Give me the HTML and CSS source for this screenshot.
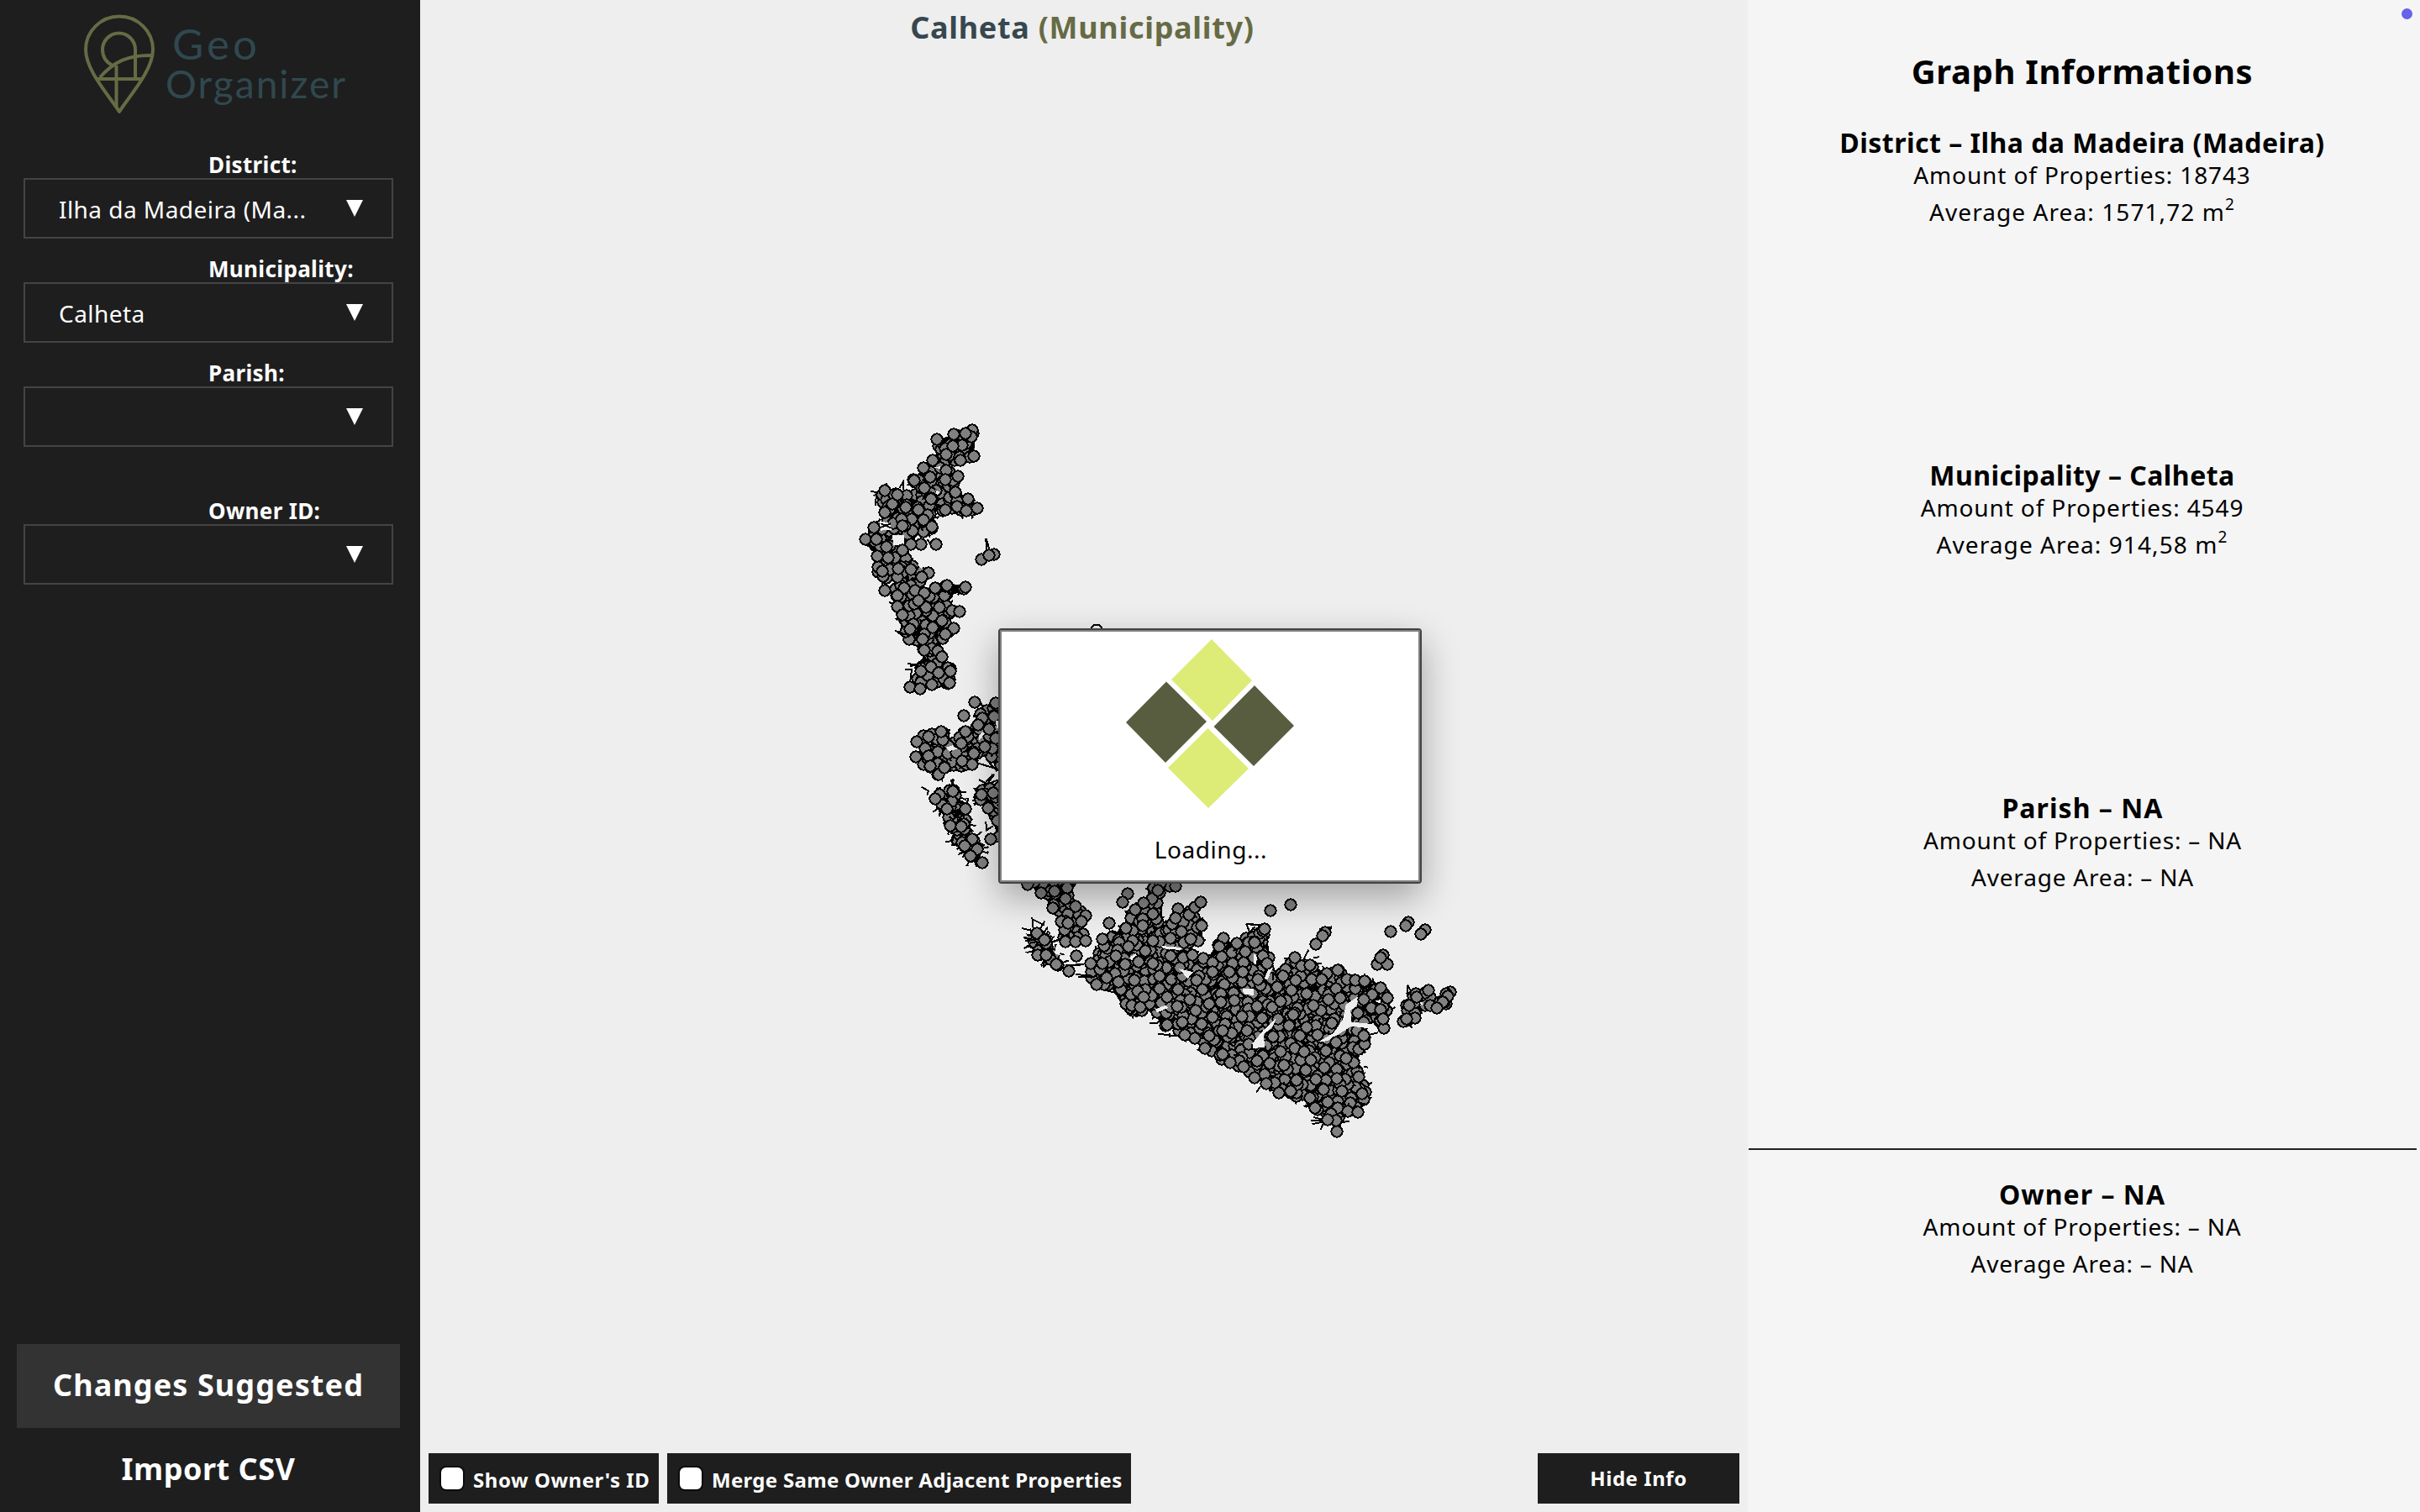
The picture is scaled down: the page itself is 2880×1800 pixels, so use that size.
FILE: index.html
```html
<!DOCTYPE html>
<html lang="en">
<head>
<meta charset="utf-8">
<title>Geo Organizer</title>
<link rel="stylesheet" href="styles.css">
</head>
<body>
<div class="app">
  <aside class="sidebar">
    <svg class="logo" viewBox="0 0 500 180" role="img" aria-label="Geo Organizer">
      <g class="logo-pin">
        <path d="M142 133C130 114 102 84 102 59a40 39.500 0 0 1 80 0C182 84 154 114 142 133Z"/>
        <path d="M134 78C126 74 122 67 122 59a19.500 19.500 0 0 1 39 0V93"/>
        <path d="M119 92C135 74 152 65 181 66M115 94H170M138.500 78V128"/>
      </g>
      <g class="logo-text">
        <text x="205" y="71" font-size="51" textLength="101">Geo</text>
        <text x="197" y="117" font-size="46" textLength="214">Organizer</text>
      </g>
    </svg>
    <div class="field"><label>District:</label><div class="select"><span>Ilha da Madeira (Ma...</span><i class="arrow"></i></div></div>
    <div class="field"><label>Municipality:</label><div class="select"><span>Calheta</span><i class="arrow"></i></div></div>
    <div class="field"><label>Parish:</label><div class="select"><span></span><i class="arrow"></i></div></div>
    <div class="field field-owner"><label>Owner ID:</label><div class="select"><span></span><i class="arrow"></i></div></div>
    <nav class="actions">
      <button class="action active">Changes Suggested</button>
      <button class="action">Import CSV</button>
    </nav>
  </aside>

  <main class="stage">
    <h1 class="title"><span class="place">Calheta</span> <span class="kind">(Municipality)</span></h1>
    <svg class="map" id="map" viewBox="500 72 1580 1658"></svg>
    <div class="toolbar">
      <div class="toggle"><i class="box"></i><span>Show Owner's ID</span></div>
      <div class="toggle toggle-merge"><i class="box"></i><span>Merge Same Owner Adjacent Properties</span></div>
      <button class="hide">Hide Info</button>
    </div>
  </main>

  <aside class="info">
    <h1>Graph Informations</h1>
    <section><h2>District – Ilha da Madeira (Madeira)</h2><p>Amount of Properties: 18743</p><p class="area">Average Area: 1571,72 m<sup>2</sup></p></section>
    <section><h2>Municipality – Calheta</h2><p>Amount of Properties: 4549</p><p class="area">Average Area: 914,58 m<sup>2</sup></p></section>
    <section class="empty last"><h2>Parish – NA</h2><p>Amount of Properties: – NA</p><p>Average Area: – NA</p></section>
    <section class="empty"><h2>Owner – NA</h2><p>Amount of Properties: – NA</p><p>Average Area: – NA</p></section>
  </aside>

  <i class="status-dot"></i>
  <div class="dialog">
    <svg class="spinner" viewBox="1338 760 204 204">
      <path class="lime" d="M1442 761L1490 810L1443 858L1394 809ZM1437.500 867L1486 915L1438 962L1390 914Z"/>
      <path class="olive" d="M1388 811.500L1436 859L1387 908L1340 860ZM1493 816L1540 864L1492 912L1444.500 865Z"/>
    </svg>
    <p>Loading...</p>
  </div>
</div>
<script src="map.js"></script>
</body>
</html>
```
FILE: styles.css
```css
* { box-sizing: border-box; margin: 0; padding: 0; }
body { font-family: "Noto Sans", "Open Sans", sans-serif; font-size: 28px; color: #000; overflow: hidden; }
button { font: inherit; letter-spacing: inherit; border: 0; background: none; color: inherit; }
.app { position: relative; display: grid; grid-template-columns: 500px 1580px 800px; width: 2880px; height: 1800px; }

.sidebar { display: flex; flex-direction: column; background: #1e1e1e; color: #fff; }
.logo { display: block; width: 500px; height: 180px; flex: none; }
.logo-pin { fill: none; stroke: #666b45; stroke-width: 4; stroke-linejoin: round; }
.logo-text { font-family: Lato, sans-serif; fill: #30484f; }
.field { display: flex; flex-direction: column; width: 440px; margin: 0 0 20px 28px; }
.field-owner { margin-top: 40px; }
.field label { padding-left: 220px; font-size: 26px; line-height: 32px; font-weight: 700; letter-spacing: .35px; white-space: nowrap; }
.select { display: flex; align-items: center; justify-content: space-between; height: 72px; padding: 2px 34px 0 40px; border: 2px solid #444; letter-spacing: .45px; }
.arrow { width: 20px; height: 20px; margin-bottom: 2px; background: #fff; clip-path: polygon(0 0, 100% 0, 50% 100%); }
.actions { display: flex; flex-direction: column; margin-top: auto; padding: 0 24px 0 20px; }
.action { height: 100px; padding-bottom: 4px; font-size: 36px; font-weight: 700; letter-spacing: .5px; }
.action.active { background: #333; letter-spacing: 1.1px; }

.stage { display: flex; flex-direction: column; background: #eee; }
.title { height: 72px; padding: 9px 4px 0 0; font-size: 36px; line-height: 48px; letter-spacing: .7px; text-align: center; color: #37474f; }
.kind { color: #666b45; }
.map { display: block; flex: 1; min-height: 0; shape-rendering: crispEdges; }
.map .node { fill: #808080; stroke: #000; stroke-width: 2; }
.map .web { fill: none; stroke: #000; stroke-width: 2; }
.map .mass { fill: #000; }
.map .gap { fill: #eee; }
.toolbar { display: flex; height: 70px; padding: 0 10px 10px; gap: 10px; color: #fff; font-size: 24px; font-weight: 700; letter-spacing: .55px; }
.toggle { display: flex; align-items: center; width: 274px; padding: 2px 0 0 15px; gap: 12px; background: #1e1e1e; white-space: nowrap; }
.toggle-merge { width: 552px; letter-spacing: .3px; }
.box { flex: none; width: 26px; height: 26px; margin-bottom: 2px; border-radius: 6px; background: #fff; box-shadow: 0 0 0 2px #0c0c0c; }
.hide { width: 240px; margin-left: auto; padding-bottom: 2px; background: #1e1e1e; }

.info { display: flex; flex-direction: column; padding: 55px 4px 0 0; background: #f5f5f5; text-align: center; }
.info h1 { font-size: 40px; line-height: 60px; letter-spacing: .65px; }
.info section { flex: none; height: 396px; padding-top: 38px; }
.info h2 { font-size: 32px; line-height: 33px; letter-spacing: .48px; }
.info p { position: relative; line-height: 44px; letter-spacing: .88px; }
.info .area { letter-spacing: 1.08px; }
.info .empty h2 { letter-spacing: 1.05px; }
.info .empty p { letter-spacing: .8px; }
.info section.last { height: 462px; margin-left: 1px; margin-bottom: -2px; border-bottom: 2px solid #222; }
.info sup { font-size: 19px; line-height: 0; vertical-align: 13px; }

.status-dot { position: absolute; left: 2858px; top: 10px; width: 13px; height: 13px; border-radius: 50%; background: #6464e8; }
.dialog { position: absolute; left: 1188px; top: 748px; width: 504px; height: 304px; display: flex; flex-direction: column; align-items: center; border: 2px solid #444; border-radius: 4px; background: #fff; box-shadow: inset 0 0 0 2px #808080, 0 16px 44px rgba(0, 0, 0, .33); padding-top: 10px; }
.spinner { width: 204px; height: 204px; }
.spinner .lime { fill: #dcec76; }
.spinner .olive { fill: #585d3f; }
.dialog p { margin-top: 25px; padding-left: 2px; line-height: 44px; letter-spacing: .55px; }
```
FILE: map.js
```js
// Each group keeps its own origin; coordinates inside are thirds of a pixel.
const groups = [
  {
    x: 1000, y: 480,
    areas: [
      "345,128 405,115 470,85 480,95 478,188 430,205 385,225 430,262 410,310 455,340 488,375 460,395 410,375 330,390 340,460 290,460 250,500 225,520 265,565 320,605 290,630 310,680 360,650 400,645 450,655 445,672 390,685 375,715 420,745 385,770 405,800 370,850 345,885 362,905 320,915 395,950 390,1000 320,1005 285,1015 250,1010 270,960 265,935 295,910 285,885 250,850 230,820 245,800 205,760 200,720 195,690 200,640 135,620 130,590 150,560 105,520 85,485 125,445 150,430 155,390 135,330 165,310 210,320 260,330 290,300 255,275 300,230 335,205 345,165"
    ],
    holes: ["140,420 180,430 182,452 145,455", "185,470 228,470 228,505 190,508", "330,228 358,226 355,234", "340,310 356,318 345,330", "275,575 300,580 290,592"],
    lines: "520,482 522,530|520,482 532,520|108,315 130,318 125,365|212,302 225,280 225,310|165,285 165,300|70,483 80,487|175,712 195,715|195,812 230,825 250,830|205,820 245,828|230,950 255,952 250,990|240,930 275,935|250,940 300,925|500,375 508,375|310,485 320,500|205,760 215,788|215,800 225,795|140,445 180,430|145,430 180,445",
    nodes: "470,95 468,120 345,128 405,110 448,107 401,152 478,188 430,205 378,182 330,205 298,230 378,240 420,260 375,272 265,275 300,303 410,318 455,342 490,375 450,383 375,380 325,342 280,380 235,372 187,360 160,312 205,328 158,390 222,438 297,418 328,440 343,505 288,503 252,503 120,445 90,485 130,487 165,513 222,525 132,545 170,552 150,600 207,592 315,605 290,622 160,670 228,660 203,687 268,668 300,678 278,706 340,660 380,652 448,657 400,740 425,745 355,730 205,725 222,757 363,777 405,803 250,808 293,842 375,825 330,800 348,885 300,882 362,907 323,943 350,962 392,957 390,1000 327,1005 248,1013 286,1020 503,557 550,540 530,543"
  },
  {
    x: 1050, y: 800,
    areas: [
      "120,250 160,210 215,210 250,240 300,215 330,180 345,130 370,130 410,110 440,110 440,360 410,340 360,290 320,335 260,340 200,370 160,345 120,310 140,275",
      "325,415 440,400 440,600 410,590 395,520 340,440"
    ],
    spiky: ["180,435 250,415 270,440 300,490 300,540 320,590 345,620 355,680 310,665 280,620 240,560 215,500 185,460"],
    holes: ["345,225 370,205 365,222 345,245", "405,175 415,175 415,200 408,200", "225,270 250,262 268,275 240,282"],
    lines: "140,410 165,425 160,440|345,385 375,400 400,365|360,405 395,365|375,400 415,385|370,535 372,565 395,550|280,430 300,430|340,325 405,345|96,302 110,302|370,310 410,355",
    nodes: "330,107 405,112 290,157 358,165 343,190 298,213 210,213 165,230 122,250 152,272 121,304 165,300 172,335 200,367 222,343 285,318 327,290 283,255 320,330 365,268 380,205 355,438 395,432 378,485 388,596 188,452 253,427 232,488 243,550 282,553 293,622 315,657 357,682"
  },
  {
    x: 1200, y: 1040,
    areas: [
      "70,30 150,20 250,30 225,60 215,100 250,130 280,150 262,180 275,240 240,245 200,240 185,220 190,175 160,125 115,70 150,45",
      "295,320 335,240 400,200 430,170 440,115 500,90 495,45 530,25 600,40 550,70 550,170 600,180 660,120 690,160 695,240 640,260 670,310 720,290 755,235 820,250 880,210 920,200 935,300 950,360 1000,320 1025,300 1080,320 1130,355 1180,345 1230,380 1290,385 1340,400 1355,445 1345,550 1290,520 1250,560 1280,580 1265,620 1250,660 1255,720 1285,785 1250,850 1180,850 1175,920 1135,880 1090,840 1060,800 970,785 920,755 860,715 830,710 740,650 630,575 560,545 500,490 455,515 400,460 370,410 315,395 280,350"
    ],
    spiky: ["85,205 140,230 165,270 165,310 190,340 150,320 95,290 85,240"],
    holes: [
      "610,340 660,352 640,375", "545,258 620,264 615,273 555,268", "525,485 560,470 570,480 530,497", "835,410 875,410 875,435 840,430", "170,260 225,260 230,325 205,300 165,285",
      "1250,438 1205,468 1195,520 1160,570 1110,600 1140,598 1225,545 1305,555 1305,538 1225,530 1222,490 1245,470",
      "1310,455 1330,450 1328,465", "955,518 945,545 912,575 915,620 870,625 870,608 910,560", "875,285 888,295 885,325 875,320", "930,340 945,335 925,380 914,373", "432,300 455,285 462,300 440,310"
    ],
    lines: "48,195 90,205 85,157|90,165 130,185|60,240 100,235|130,170 115,195|185,285 200,290|205,328 270,325|240,360 300,365|250,368 300,368|340,415 380,425|505,535 530,535 550,515|535,572 600,580|575,570 575,585|850,180 900,183|850,180 862,210 880,190|360,205 385,215|240,325 300,320",
    nodes: "70,40 165,62 210,52 118,70 205,90 158,122 240,118 275,150 262,172 188,170 212,178 203,242 240,243 275,240 243,293 360,177 427,72 407,103 535,60 597,45 452,128 517,145 605,125 597,160 667,120 688,103 690,186 480,186 420,196 618,208 650,235 580,232 515,240 335,235 430,262 490,275 383,293 293,322 335,320 417,323 465,315 515,320 580,293 625,300 658,290 380,357 393,387 450,380 540,365 315,397 350,372 540,412 605,415 482,440 440,472 472,478 568,442 648,450 672,382 692,415 728,352 768,230 752,262 762,298 815,248 845,280 880,243 800,322 840,318 838,350 790,352 770,395 760,430 758,460 807,452 718,465 603,475 668,490 567,540 622,530 690,537 718,578 765,562 835,510 853,560 630,575 888,473 103,213 130,237 105,290 135,290 172,325 215,347"
  },
  {
    x: 1480, y: 1060,
    areas: ["600,365 660,355 690,385 740,360 745,380 725,410 690,430 650,425 640,410 630,455 580,475 560,465 580,410"],
    holes: ["625,400 640,400 640,412"],
    lines: "585,338 585,375|585,338 600,365|10,120 55,125|315,130 270,138|315,130 295,155|430,630 443,632|215,245 232,212|145,242 165,245|250,240 270,238|260,262 280,262|240,822 300,820|245,835 290,825|250,810 330,830|275,855 290,820|330,830 378,825|340,815 365,800|30,548 30,570|45,722 60,700|175,752 175,735|215,772 240,760|440,765 400,755|105,290 105,320|450,515 480,508",
    nodes: "95,72 167,52 75,137 290,150 283,163 258,192 525,148 588,113 578,125 647,140 632,157 497,230 477,265 513,265 490,240 40,185 68,235 85,262 182,240 207,270 238,267 340,285 335,285 142,305 185,322 278,318 52,317 330,352 398,322 433,325 490,347 513,385 460,373 428,390 408,438 455,420 490,425 500,493 497,460 345,385 303,390 225,370 172,357 120,345 132,397 48,413 248,412 178,445 315,475 163,482 105,523 200,520 265,517 225,490 433,550 428,520 330,543 293,573 182,565 215,577 133,577 365,600 240,605 47,608 92,617 143,625 222,643 288,633 332,640 190,677 258,675 333,672 410,665 40,670 112,687 80,690 125,722 168,718 285,712 237,740 300,755 350,718 423,725 255,778 408,792 333,862 330,822 300,820 660,358 617,382 722,370 728,378 712,400 665,412 690,420 592,410 612,455 570,468 583,458"
  }
];

const NS = "http://www.w3.org/2000/svg";
const map = document.getElementById("map");
let seed = 20231;
const rand = () => (seed = (seed * 16807) % 2147483647) / 2147483647;

function add(name, cls, attrs) {
  const el = document.createElementNS(NS, name);
  el.setAttribute("class", cls);
  for (const key in attrs) el.setAttribute(key, attrs[key]);
  map.appendChild(el);
}
const parse = (text, g) => text.trim().split(/\s+/).map(p => {
  const [x, y] = p.split(",").map(Number);
  return [g.x + x / 3, g.y + y / 3];
});
function inside(px, py, poly) {
  let hit = false;
  for (let i = 0, j = poly.length - 1; i < poly.length; j = i++) {
    const [xi, yi] = poly[i], [xj, yj] = poly[j];
    if ((yi > py) !== (yj > py) && px < ((xj - xi) * (py - yi)) / (yj - yi) + xi) hit = !hit;
  }
  return hit;
}
const node = (x, y) => add("circle", "node", { cx: Math.round(x), cy: Math.round(y), r: 6.7 });

function fill(poly, spiky) {
  add("polygon", "mass", { points: poly.join(" ") });
  const xs = poly.map(p => p[0]), ys = poly.map(p => p[1]);
  const spots = [];
  for (let y = Math.min(...ys); y < Math.max(...ys); y += 8)
    for (let x = Math.min(...xs); x < Math.max(...xs); x += 8) {
      const px = x + rand() * 8, py = y + rand() * 8;
      if (inside(px, py, poly)) spots.push([px, py, rand()]);
    }
  spots.sort((a, b) => a[2] - b[2]);
  spots.forEach(([x, y]) => {
    const reach = spiky ? 13 : 9, n = spiky ? 4 : 1;
    for (let i = 0; i < n; i++) {
      const a = rand() * 6.283, dx = Math.cos(a) * reach, dy = Math.sin(a) * reach;
      add("path", "web", { d: `M${x} ${y}l${dx} ${dy}l${rand() * 4 - 2} ${rand() * 4 - 2}` });
    }
    node(x, y);
  });
}

groups.forEach(g => {
  g.areas.forEach(a => fill(parse(a, g), false));
  (g.spiky || []).forEach(a => fill(parse(a, g), true));
});
groups.forEach(g => g.holes.forEach(h => add("polygon", "gap", { points: parse(h, g).join(" ") })));
groups.forEach(g => g.lines.split("|").forEach(l => add("polyline", "web", { points: parse(l, g).join(" ") })));
groups.forEach(g => parse(g.nodes, g).forEach(([x, y]) => node(x, y)));
add("circle", "web", { cx: 1305, cy: 750, r: 6.5 });
```
